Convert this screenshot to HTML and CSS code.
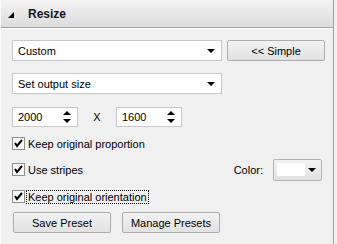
FILE: index.html
```html
<!DOCTYPE html>
<html lang="en">
<head>
  <meta charset="UTF-8">
  <title>Resize</title>
  <link rel="stylesheet" href="styles.css">
</head>
<body>
  <div class="panel">
    <!-- Cabecera del panel -->
    <div class="header">
      <svg class="collapse" width="6" height="6" viewBox="0 0 6 6"><polygon points="6,0 6,6 0,6" fill="#000"/></svg>
      <span class="title">Resize</span>
    </div>

    <div class="content">
      <div class="row">
        <div class="combo">
          <span>Custom</span>
          <span class="arrow"></span>
        </div>
        <div class="btn btn-simple">&lt;&lt; Simple</div>
      </div>

      <div class="row row-mode">
        <div class="combo">
          <span>Set output size</span>
          <span class="arrow"></span>
        </div>
      </div>

      <div class="row row-size">
        <div class="spin">
          <span>2000</span>
          <span class="spin-arrows"><span class="up"></span><span class="down"></span></span>
        </div>
        <span class="times">X</span>
        <div class="spin">
          <span>1600</span>
          <span class="spin-arrows"><span class="up"></span><span class="down"></span></span>
        </div>
      </div>

      <div class="check-row first">
        <span class="box"><svg width="11" height="11" viewBox="0 0 11 11"><polyline points="2,5 4,8 9,2" fill="none" stroke="#000" stroke-width="2"/></svg></span>
        <span class="label">Keep original proportion</span>
      </div>

      <div class="check-row">
        <span class="box"><svg width="11" height="11" viewBox="0 0 11 11"><polyline points="2,5 4,8 9,2" fill="none" stroke="#000" stroke-width="2"/></svg></span>
        <span class="label">Use stripes</span>
        <span class="color-label">Color:</span>
        <div class="color-btn">
          <span class="swatch"></span>
          <span class="arrow"></span>
        </div>
      </div>

      <div class="check-row">
        <span class="box"><svg width="11" height="11" viewBox="0 0 11 11"><polyline points="2,5 4,8 9,2" fill="none" stroke="#000" stroke-width="2"/></svg></span>
        <span class="label focused">Keep original orientation</span>
      </div>

      <div class="row row-buttons">
        <div class="btn btn-preset">Save Preset</div>
        <div class="btn btn-preset">Manage Presets</div>
      </div>
    </div>
  </div>
</body>
</html>
```

FILE: styles.css
```css
body {
  margin: 0;
  padding: 0;
  background: #f0f0f0;
  font-family: 'Liberation Sans', Arial, sans-serif;
  font-size: 11px;
  color: #000;
}

.panel {
  width: 334px;
  height: 244px;
  box-sizing: border-box;
  border-left: 1px solid #fcfcfc;
  border-right: 1px solid #a0a0a0;
  background: #f0f0f0;
}

/* Cabecera */
.header {
  height: 27px;
  display: flex;
  align-items: center;
  border-bottom: 1px solid #a0a0a0;
  background: linear-gradient(to bottom, #f3f3f3, #dcdcdc);
}

.collapse {
  margin-left: 7px;
  margin-top: 3px;
}

.title {
  margin-left: 14px;
  font-weight: bold;
  font-size: 12px;
  color: #141428;
}

.content {
  border-top: 1px solid #fafafa;
  padding: 11px 0 0 11px;
}

.row {
  display: flex;
  align-items: center;
}

.row-mode {
  margin-top: 12px;
}

.row-size {
  margin-top: 13px;
}

.row-buttons {
  margin-top: 9px;
  margin-left: 1px;
  gap: 11px;
}

/* Combos */
.combo {
  width: 210px;
  height: 21px;
  box-sizing: border-box;
  border: 1px solid #c8c8c8;
  background: #fff;
  display: flex;
  align-items: center;
  justify-content: space-between;
  padding: 0 6px 0 5px;
}

.arrow {
  width: 0;
  height: 0;
  border-left: 4px solid transparent;
  border-right: 4px solid transparent;
  border-top: 4px solid #000;
  margin-top: 1px;
}

/* Botones */
.btn {
  height: 21px;
  box-sizing: border-box;
  border: 1px solid #acacac;
  border-radius: 2px;
  background: linear-gradient(to bottom, #f2f2f2, #e2e2e2);
  display: flex;
  align-items: center;
  justify-content: center;
}

.btn-simple {
  width: 98px;
  margin-left: 5px;
}

.btn-preset {
  width: 98px;
}

/* Spin boxes */
.spin {
  width: 66px;
  height: 20px;
  box-sizing: border-box;
  border: 1px solid #c8c8c8;
  background: #fff;
  display: flex;
  align-items: center;
  justify-content: space-between;
  padding: 0 6px 0 5px;
}

.spin-arrows {
  display: flex;
  flex-direction: column;
  gap: 4px;
}

.spin-arrows .up {
  width: 0;
  height: 0;
  border-left: 4px solid transparent;
  border-right: 4px solid transparent;
  border-bottom: 4px solid #000;
}

.spin-arrows .down {
  width: 0;
  height: 0;
  border-left: 4px solid transparent;
  border-right: 4px solid transparent;
  border-top: 4px solid #000;
}

.times {
  width: 38px;
  text-align: center;
}

/* Casillas */
.check-row {
  height: 13px;
  display: flex;
  align-items: center;
  margin-top: 13px;
}

.check-row.first {
  margin-top: 10px;
}

.check-row + .check-row + .check-row {
  margin-top: 14px;
}

.box {
  width: 13px;
  height: 13px;
  box-sizing: border-box;
  border: 1px solid #8e8f8f;
  background: linear-gradient(135deg, #f4f4f4, #ffffff);
  display: flex;
  align-items: center;
  justify-content: center;
}

.label {
  margin-left: 2px;
  padding: 0 1px;
  line-height: 12px;
}

.focused {
  outline: 1px dotted #000;
}

.color-label {
  margin-left: auto;
}

.color-btn {
  width: 49px;
  height: 22px;
  box-sizing: border-box;
  margin-left: 10px;
  margin-right: 11px;
  border: 1px solid #b4b4b4;
  border-radius: 2px;
  background: linear-gradient(to bottom, #f2f2f2, #e2e2e2);
  display: flex;
  align-items: center;
  justify-content: space-between;
  padding: 0 5px 0 3px;
}

.swatch {
  width: 28px;
  height: 13px;
  background: #fff;
}
```
